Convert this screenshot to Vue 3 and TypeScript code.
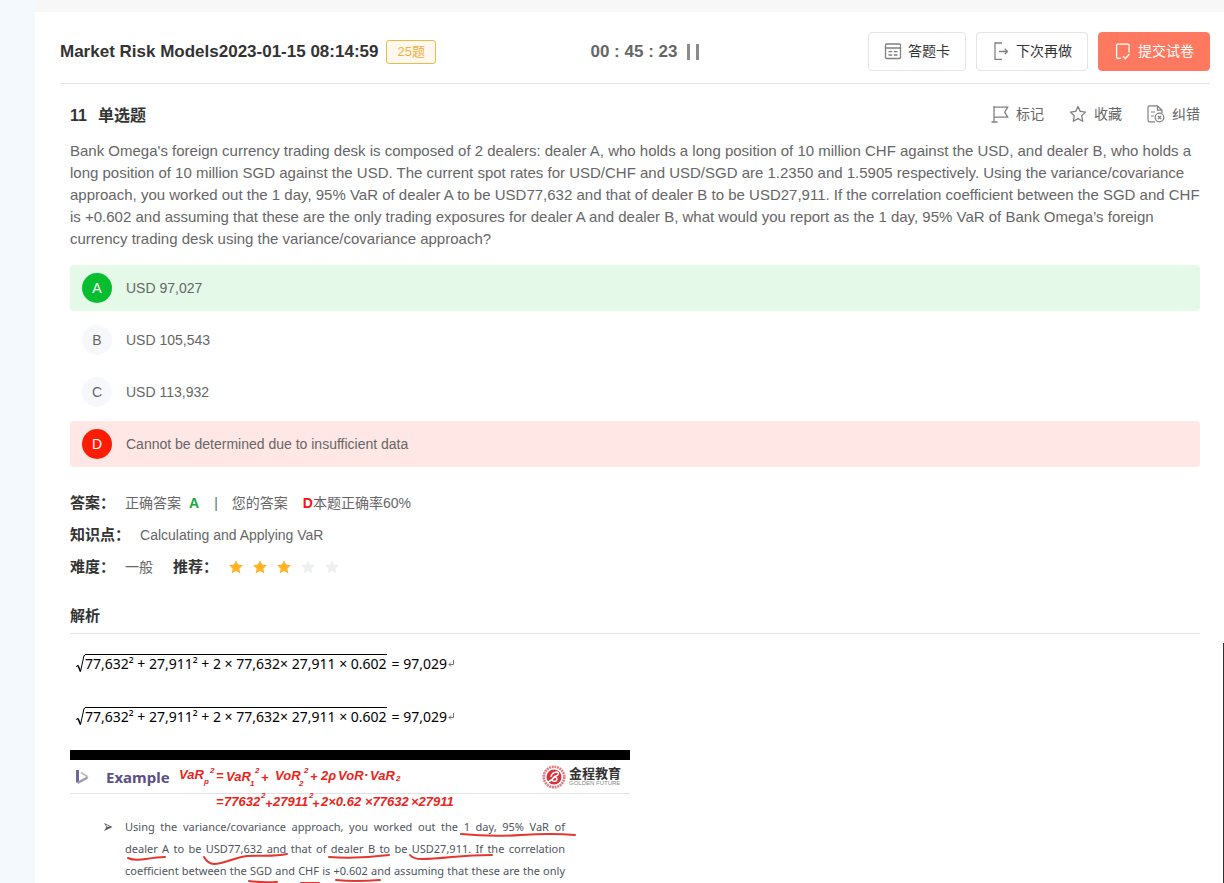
<script setup lang="ts">
import { ref } from 'vue'

interface Option {
  key: string
  text: string
  state: 'right' | 'wrong' | 'plain'
}

const options: Option[] = [
  { key: 'A', text: 'USD 97,027', state: 'right' },
  { key: 'B', text: 'USD 105,543', state: 'plain' },
  { key: 'C', text: 'USD 113,932', state: 'plain' },
  { key: 'D', text: 'Cannot be determined due to insufficient data', state: 'wrong' },
]

const rating = ref<number>(3)

const slideLines: string[] = [
  'Using the variance/covariance approach, you worked out the 1 day, 95% VaR of',
  'dealer A to be USD77,632 and that of dealer B to be USD27,911. If the correlation',
  'coefficient between the SGD and CHF is +0.602 and assuming that these are the only',
]

interface Note {
  x: number
  y: number
  text: string
  small?: boolean
}

const notes: Note[] = [
  { x: 109, y: 29, text: 'VaR' },
  { x: 134, y: 34, text: 'p', small: true },
  { x: 140, y: 23, text: '2', small: true },
  { x: 146, y: 30, text: '=' },
  { x: 156, y: 31, text: 'VaR' },
  { x: 180, y: 36, text: '1', small: true },
  { x: 185, y: 23, text: '2', small: true },
  { x: 191, y: 32, text: '+' },
  { x: 205, y: 30, text: 'VoR' },
  { x: 229, y: 36, text: '2', small: true },
  { x: 234, y: 23, text: '2', small: true },
  { x: 240, y: 31, text: '+' },
  { x: 251, y: 30, text: '2ρ' },
  { x: 268, y: 30, text: 'VoR' },
  { x: 294, y: 29, text: '·' },
  { x: 300, y: 30, text: 'VaR' },
  { x: 326, y: 31, text: '2', small: true },
  { x: 146, y: 56, text: '=' },
  { x: 154, y: 56, text: '77632' },
  { x: 191, y: 48, text: '2', small: true },
  { x: 195, y: 58, text: '+' },
  { x: 203, y: 56, text: '27911' },
  { x: 239, y: 48, text: '2', small: true },
  { x: 242, y: 58, text: '+' },
  { x: 251, y: 56, text: '2×0.62' },
  { x: 295, y: 56, text: '×77632' },
  { x: 341, y: 56, text: '×27911' },
]
</script>

<template>
  <div class="page">
    <main class="card">
      <header class="bar">
        <div class="title-wrap">
          <h1 class="title">Market Risk Models2023-01-15 08:14:59</h1>
          <span class="tag">25题</span>
        </div>
        <div class="timer">
          <span>00 : 45 : 23</span>
          <button class="pause" type="button" aria-label="暂停">
            <svg width="12" height="16" viewBox="0 0 12 16"><path d="M1.500 0v16M10.500 0v16" stroke="#8c8c8c" stroke-width="3" /></svg>
          </button>
        </div>
        <div class="actions">
          <button class="btn" type="button">
            <svg width="18" height="18" viewBox="0 0 18 18" fill="none" stroke="#808080" stroke-width="1.300">
              <rect x="1.500" y="2" width="15" height="14.500" rx="1" />
              <path d="M1.500 6h15M4.500 9.700h3.700M9.800 9.700h3.700M4.500 13h3.700M9.800 13h3.700" />
            </svg>
            答题卡
          </button>
          <button class="btn" type="button">
            <svg width="18" height="18" viewBox="0 0 18 18" fill="none" stroke="#808080" stroke-width="1.300">
              <path d="M10 1H3v16.400h7M7 9.500h8.500M12.700 6.700l2.800 2.800-2.800 2.800" />
            </svg>
            下次再做
          </button>
          <button class="btn primary" type="button">
            <svg width="18" height="18" viewBox="0 0 18 18" fill="none" stroke="#fff" stroke-width="1.300">
              <path d="M7 16.300H3.600a1 1 0 0 1-1-1V3.200a1 1 0 0 1 1-1H14a1 1 0 0 1 1 1v7.300M9 14.200l2.300 2.300 4.200-4.500" />
            </svg>
            提交试卷
          </button>
        </div>
      </header>

      <section class="body">
        <div class="q-head">
          <h2 class="q-title"><span>11</span><span>单选题</span></h2>
          <div class="tools">
            <button class="tool" type="button">
              <svg width="18" height="18" viewBox="0 0 18 18" fill="none" stroke="#808080" stroke-width="1.300">
                <path d="M3 1v16M.5 17h6M3 2.200h13.700l-3 5 3 5H3" />
              </svg>
              标记
            </button>
            <button class="tool" type="button">
              <svg width="18" height="18" viewBox="0 0 18 18" fill="none" stroke="#808080" stroke-width="1.300" stroke-linejoin="round">
                <path d="M9 1.500l2.300 4.900 5.300.7-3.900 3.700 1 5.400L9 13.600l-4.700 2.600 1-5.400L1.400 7.100l5.300-.7z" />
              </svg>
              收藏
            </button>
            <button class="tool" type="button">
              <svg width="18" height="18" viewBox="0 0 18 18" fill="none" stroke="#808080" stroke-width="1.200">
                <path d="M8 16.800H2.500a1.500 1.500 0 0 1-1.500-1.500V2.300A1.500 1.500 0 0 1 2.500.8h8l4.500 4.400V8M10.500.8v4.400H15M4 7h4M4 11h3" />
                <circle cx="12.500" cy="12.500" r="4.300" />
                <path d="M11 11l3 3M14 11l-3 3" />
              </svg>
              纠错
            </button>
          </div>
        </div>

        <p class="question">
          Bank Omega's foreign currency trading desk is composed of 2 dealers: dealer A, who holds a long position of 10 million CHF against the USD, and dealer B, who holds a long position of 10 million SGD against the USD. The current spot rates for USD/CHF and USD/SGD are 1.2350 and 1.5905 respectively. Using the variance/covariance approach, you worked out the 1 day, 95% VaR of dealer A to be USD77,632 and that of dealer B to be USD27,911. If the correlation coefficient between the SGD and CHF is +0.602 and assuming that these are the only trading exposures for dealer A and dealer B, what would you report as the 1 day, 95% VaR of Bank Omega’s foreign currency trading desk using the variance/covariance approach?
        </p>

        <div class="options">
          <button v-for="o in options" :key="o.key" type="button" class="option" :class="o.state">
            <span class="letter">{{ o.key }}</span>
            <span>{{ o.text }}</span>
          </button>
        </div>

        <div class="facts">
          <div class="fact">
            <strong class="label">答案：</strong>
            <span>正确答案</span>
            <b class="good">A</b>
            <span class="sep">|</span>
            <span class="yours">您的答案</span>
            <span><b class="bad">D</b>本题正确率60%</span>
          </div>
          <div class="fact">
            <strong class="label">知识点：</strong>
            <span>Calculating and Applying VaR</span>
          </div>
          <div class="fact">
            <strong class="label">难度：</strong>
            <span class="level">一般</span>
            <strong class="label">推荐：</strong>
            <span class="stars">
              <svg v-for="n in 5" :key="n" width="16" height="16" viewBox="0 0 16 16" :class="n <= rating ? 'on' : 'off'">
                <path d="M8 1.200l2.100 4.400 4.900.6-3.600 3.300 1 4.900L8 12l-4.400 2.400 1-4.900L1 6.200l4.900-.6z" />
              </svg>
            </span>
          </div>
        </div>

        <h3 class="analysis">解析</h3>

        <div v-for="n in 2" :key="n" class="formula">
          <svg class="root" width="9" height="20" viewBox="0 0 9 20" fill="none" stroke="#000">
            <path d="M0 12.500l2-1" />
            <path d="M2 11.500l2.500 6" stroke-width="1.600" />
            <path d="M4.500 17.500L8 1.500h1" />
          </svg>
          <span class="radicand">77,632² + 27,911² + 2 × 77,632× 27,911 × 0.602</span>
          <span class="result">= 97,029</span>
          <svg width="7" height="8" viewBox="0 0 7 8" fill="none" stroke="#777"><path d="M5.500 0v4.500H1M3 2.500l-2 2 2 2" /></svg>
        </div>

        <div class="slide">
          <div class="slide-head">
            <svg class="mark" width="15" height="16" viewBox="0 0 15 16" fill="none">
              <path d="M2.500 1v12.500" stroke="#6f6799" stroke-width="3" />
              <path d="M2.500 14l10-5.500" stroke="#9d97bd" stroke-width="2.500" />
              <path d="M6 3.500l7 4.500" stroke="#b9bccb" stroke-width="2" />
            </svg>
            <span class="example">Example</span>
            <span class="brand">
              <svg width="24" height="24" viewBox="0 0 24 24" fill="none">
                <circle cx="12" cy="12" r="10.300" stroke="#e07c80" stroke-width="2.600" stroke-dasharray="2 .7" />
                <circle cx="12" cy="12" r="7.500" fill="#d7323b" />
                <path d="M6 17c3-1 5-3 7-6M9 12c0-3 3-5 6-5 3 1 1 4-2 4.500M12 12c3 0 4 2 2 4-2 1-4 0-4-1.500" stroke="#fff" stroke-width="1.400" />
              </svg>
              <span class="brand-text"><b>金程教育</b><small>GOLDEN FUTURE</small></span>
            </span>
          </div>
          <div class="slide-body">
            <svg class="bullet" width="9" height="8" viewBox="0 0 9 8"><path d="M0 0l8.500 4L0 8l2.500-4z" fill="#555" /><path d="M1.800 1.500L6 3.700H3z" fill="#fff" /></svg>
            <div class="slide-text">
              <p v-for="line in slideLines" :key="line">{{ line }}</p>
            </div>
          </div>
          <svg class="ink" viewBox="0 0 560 134" width="560" height="134">
            <text v-for="(t, i) in notes" :key="i" :x="t.x" :y="t.y" :class="{ small: t.small }">{{ t.text }}</text>
            <g fill="none" stroke="#e2382f" stroke-width="2" stroke-linecap="round">
              <path d="M391 84q30 3 60 1t54 0" />
              <path d="M58 108q6 3 18 1t19-2" />
              <path d="M134 107q4 7 10 7c10 0 22-7 33-8s27 1 40-2" />
              <path d="M259 107q28 2 60-2" />
              <path d="M340 105q3 4 12 4t30-2 40-2" />
              <path d="M179 131q14 2 28 1M231 133h18M266 130q18 2 44 0" />
            </g>
          </svg>
        </div>
      </section>
    </main>
    <div class="edge"></div>
  </div>
</template>

<style>
body {
  margin: 0;
  background: #f7f7f7;
}
</style>

<style scoped>
.page {
  position: relative;
  box-sizing: border-box;
  height: 100vh;
  overflow: hidden;
  padding-top: 12px;
  border-left: 35px solid #f4f9fd;
  background: #f7f7f7;
  color: #666;
  font: 14px/22px "Liberation Sans", "Noto Sans CJK SC", sans-serif;
}
h1, h2, h3, p { margin: 0; }
svg { flex: none; display: block; }
button {
  font: inherit;
  color: inherit;
  background: none;
  border: 0;
  padding: 0;
  cursor: pointer;
}
.card {
  min-height: 100%;
  box-sizing: border-box;
  padding: 0 14px 0 25px;
  background: #fff;
}
.bar {
  display: flex;
  align-items: center;
  justify-content: space-between;
  padding: 20px 0 12px;
  border-bottom: 1px solid #e2e2e2;
}
.title-wrap { display: flex; align-items: center; gap: 8px; }
.title { font-size: 17px; line-height: 22px; color: #333; }
.tag {
  padding: 0 10px;
  border: 1px solid #e8bc4a;
  border-radius: 3px;
  background: #fff8ee;
  color: #f5ae3d;
  font-size: 13px;
  line-height: 22px;
}
.timer {
  display: flex;
  align-items: center;
  gap: 10px;
  padding-right: 14px;
  font-size: 17px;
  font-weight: bold;
}
.actions { display: flex; gap: 10px; }
.btn {
  display: flex;
  align-items: center;
  gap: 6px;
  height: 39px;
  padding: 0 15px 1px;
  border: 1px solid #e4e4e4;
  border-radius: 4px;
  color: #333;
}
.btn.primary { border-color: #ff7860; background: #ff7860; color: #fff; }
.body { padding: 0 10px; }
.q-head {
  display: flex;
  align-items: center;
  justify-content: space-between;
  height: 60px;
  margin-bottom: -4px;
}
.q-title { display: flex; gap: 11px; padding-top: 3px; font-size: 16px; color: #333; }
.tools { display: flex; gap: 25px; }
.tool { display: flex; align-items: center; gap: 7px; }
.question { font-size: 15px; line-height: 22px; }
.options { display: flex; flex-direction: column; gap: 6px; margin-top: 15px; }
.option {
  display: flex;
  align-items: center;
  gap: 14px;
  height: 46px;
  padding: 0 12px;
  border-radius: 4px;
  text-align: left;
}
.letter {
  width: 30px;
  line-height: 30px;
  border-radius: 50%;
  background: #f6f8fb;
  text-align: center;
}
.right { background: #e4f9e8; }
.right .letter { background: #07bd30; color: #fff; }
.wrong { background: #ffe7e5; }
.wrong .letter { background: #fd1d05; color: #fff; }
.facts { margin-top: 20px; }
.fact { display: flex; align-items: center; height: 32px; }
.label { margin-right: 10px; font-size: 15px; color: #333; }
.good { margin: 0 15px 0 8px; color: #18a83c; }
.yours { margin: 0 15px 0 14px; }
.bad { color: #f01515; }
.level { margin-right: 20px; }
.stars { display: flex; gap: 8px; }
.on { fill: #ffb329; }
.off { fill: #eeeff3; }
.analysis {
  margin-top: 15px;
  border-bottom: 1px solid #e2e2e2;
  color: #333;
  font-size: 15px;
  line-height: 35px;
  margin-bottom: 3px;
}
.formula {
  display: flex;
  align-items: center;
  height: 53px;
  padding-left: 6px;
  color: #000;
  font: 14px/18px "Noto Sans", sans-serif;
  white-space: nowrap;
}
.radicand { border-top: 1px solid #000; }
.result { margin: 0 1px 0 5px; }
.slide {
  position: relative;
  width: 560px;
  margin-top: 7px;
  border-top: 10px solid #000;
  color: #4e5560;
  font-family: "Noto Sans", "Noto Sans CJK SC", sans-serif;
}
.slide-head {
  display: flex;
  align-items: center;
  height: 33px;
  padding: 0 9px 0 5px;
  border-bottom: 1px solid #e3e3e6;
}
.example { margin-left: 16px; font-size: 15px; font-weight: bold; color: #5b5088; }
.brand { display: flex; align-items: center; gap: 3px; margin-left: auto; }
.brand-text { display: flex; flex-direction: column; color: #333; }
.brand-text b { font-size: 13px; line-height: 14px; }
.brand-text small { font: 6px/7px "Liberation Sans", sans-serif; color: #888; }
.slide-body { display: flex; gap: 12px; padding: 22px 0 0 34px; }
.bullet { margin-top: 7px; }
.slide-text { width: 440px; font-size: 11px; line-height: 22px; }
.slide-text p { text-align-last: justify; white-space: nowrap; }
.ink { position: absolute; left: 0; top: -10px; }
.ink text {
  fill: #e8251c;
  font: italic bold 13px "Liberation Sans", sans-serif;
}
.ink text.small { font-size: 8px; }
.edge {
  position: absolute;
  top: 643px;
  right: 0;
  bottom: 0;
  width: 1px;
  background: #333;
}
</style>
